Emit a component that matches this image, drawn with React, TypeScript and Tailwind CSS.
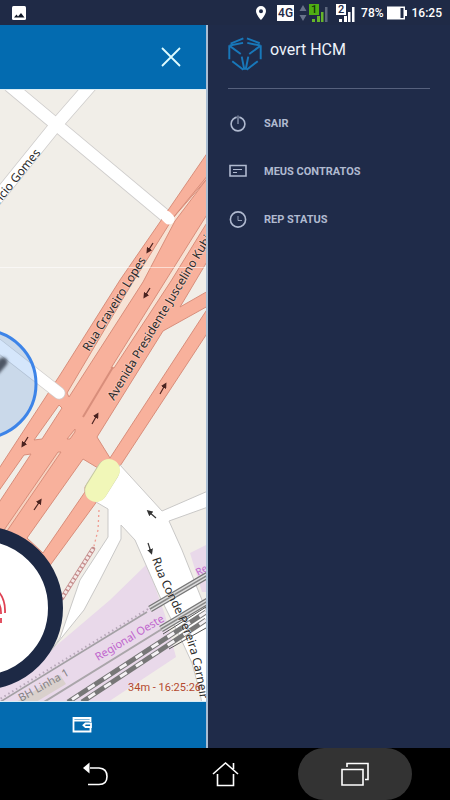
import React from "react";

function MapView() {
  return (
    <svg
      viewBox="0 90 206 611"
      preserveAspectRatio="xMaxYMax slice"
      className="absolute inset-0 h-full w-full font-['Noto_Sans',sans-serif]"
      role="img"
      aria-label="Mapa"
    >
      <defs>
        <path id="conde" d="M152 559 Q158 577 165 591 Q178 616 187 641 Q196 668 202 712" />
        <marker id="tip" viewBox="0 0 6 6" refX="3" refY="3" markerWidth="5" markerHeight="5" orient="auto">
          <path d="M0 0 L6 3 L0 6Z" fill="#4a2320" />
        </marker>
        <marker id="tipDark" viewBox="0 0 6 6" refX="3" refY="3" markerWidth="5" markerHeight="5" orient="auto">
          <path d="M0 0 L6 3 L0 6Z" fill="#333" />
        </marker>
        <filter id="soft" x="-200%" y="-200%" width="500%" height="500%">
          <feGaussianBlur stdDeviation="1.5" />
        </filter>
      </defs>
      <rect y="90" width="206" height="612" fill="#f1eee8" />

      {/* station area */}
      <path d="M147 564L110 600L57 645L0 688V702H108L176 657L165 615Z" fill="#e9d9ea" />
      <path d="M190 553L206 545V592H202Z" fill="#e9d9ea" />

      {/* residential streets */}
      <g fill="none" stroke="#cfcdcc" strokeWidth="13.5">
        <path d="M10 86L168 218" strokeLinecap="round" />
        <path d="M91 85L56 125L-6 202" />
      </g>
      <g fill="none" stroke="#fff" strokeWidth="12">
        <path d="M10 86L168 218" strokeLinecap="round" />
        <path d="M91 85L56 125L-6 202" />
      </g>

      {/* avenue */}
      <g stroke="#d88e7b" strokeWidth="1">
        <path d="M208 152L160 222L120 280L60 375L-2 470V590H32L95 504L122 463L208 332Z" fill="#f8b19c" />
        <g fill="#f1eee8">
          <path d="M208 260L180 307L208 291Z" />
          <path d="M208 306L163 331L97 437L110 458L208 308Z" />
          <path d="M83 459L98 468L85 487V492L43 553L27 538Z" />
          <path d="M206 180L173 218L128 290L67 393L69 397L143 282L175 221Z" fill="#f7e3d5" />
          <path d="M208 213L166 280L111 368L114 368L171 281L208 221Z" fill="#f7e3d5" />
          <path d="M59 405L62 408L42 439L34 440Z" />
          <path d="M24 455L31 454L-2 504V492Z" />
          <path d="M75 429V432L70 439H67Z" fill="#f7d2c0" />
          <path d="M58 452H61L7 531L4 530Z" fill="#f7d2c0" />
        </g>
        <path d="M208 175L172 219" />
        <path d="M113 367L83 417" strokeWidth="2" />
      </g>
      <path d="M166 216L169 219" stroke="#fff" strokeWidth="11" strokeLinecap="round" />

      <path d="M-5 343L59 393" stroke="#cfcdcc" strokeWidth="13" strokeLinecap="round" />
      <path d="M-5 343L59 393" stroke="#fff" strokeWidth="11.5" strokeLinecap="round" />

      {/* lower streets */}
      <path
        d="M120 465L162 511L208 491V507L169 521L182 550L202 600L208 615V704H202L200 693L192 663L180 637L160 597L135 540L121 525V539L100 580L84 610L50 652L60 638L80 580L108 537V509L96 502Z"
        fill="#fff"
        stroke="#c9c8c7"
      />
      <path d="M108 471L96 490" stroke="#c5c9a4" strokeWidth="23" strokeLinecap="round" />
      <path d="M109 470L96 491" stroke="#f1f7b8" strokeWidth="22" strokeLinecap="round" />
      <path d="M99 510L98 530L94 546" fill="none" stroke="#ef9c91" strokeWidth="1.3" strokeDasharray="2 3" />
      <path d="M93 549L62 598" stroke="#c58d8c" strokeWidth="4.5" strokeLinecap="round" />
      <path d="M93 549L62 598" stroke="#f4e8e6" strokeWidth="3" strokeDasharray="3 1.5" />

      {/* railway */}
      <g fill="none">
        <path d="M147 612L0 702" stroke="#a3a0a4" strokeWidth="1.6" />
        <path d="M148 609L0 699" stroke="#b9a9bb" strokeWidth="2" strokeDasharray="1.5 3" />
        <path d="M162 629L44 702" stroke="#aaa6aa" strokeWidth="2" />
        <g stroke="#777">
          <path d="M206 612L68 702" strokeWidth="5" />
          <path d="M206 620L82 702" strokeWidth="5" />
        </g>
        <g stroke="#f5f2f5" strokeWidth="3" strokeDasharray="8 11">
          <path d="M206 612L68 702" />
          <path d="M206 620L82 702" />
        </g>
        <path d="M150 609L208 575M161 629L208 601" stroke="#777" strokeWidth="7" />
        <path d="M150 609L208 575M161 629L208 601" stroke="#ddd" strokeWidth="4.5" />
        <path d="M150 609L208 575M161 629L208 601" stroke="#888" strokeWidth="1.5" />
        <path d="M163 634L206 607M169 649L206 628" stroke="#555" strokeWidth="1" />
      </g>

      {/* one-way arrows */}
      <g stroke="#4a2320" strokeWidth="1.2">
        <path d="M153 243L148 251" markerEnd="url(#tip)" />
        <path d="M150 288L145 296" markerEnd="url(#tip)" />
        <path d="M28 437L23 445" markerEnd="url(#tip)" />
        <path d="M92 424L97 415" markerEnd="url(#tip)" />
        <path d="M160 394L165 385" markerEnd="url(#tip)" />
        <path d="M34 510L40 501" markerEnd="url(#tip)" />
      </g>
      <g stroke="#333" strokeWidth="1.2">
        <path d="M156 518L149 512" markerEnd="url(#tipDark)" />
        <path d="M148 543L151 552" markerEnd="url(#tipDark)" />
      </g>
      <path d="M0 267.500H206" stroke="#fff" strokeOpacity="0.55" />

      {/* labels */}
      <g fontSize="12" fill="#2b2b2b" stroke="#fff" strokeWidth="1.5" strokeOpacity="0.3" paintOrder="stroke">
        <text transform="translate(41 153) rotate(-51)" textAnchor="end">ncio Gomes</text>
        <text transform="translate(89 352) rotate(-58)">Rua Craveiro Lopes</text>
        <text transform="translate(114 401) rotate(-59)">Avenida Presidente Juscelino Kubi</text>
        <text>
          <textPath href="#conde">Rua Conde Pereira Carneir</textPath>
        </text>
      </g>
      <path d="M16 702L60 675L66 684L36 702Z" fill="#d9d0cc" />
      <g fontSize="11">
        <text transform="translate(21 702) rotate(-29)" fill="#858285">BH Linha 1</text>
        <text transform="translate(98 661) rotate(-31)" fill="#c065cd">Regional Oeste</text>
        <text transform="translate(198 576) rotate(-28)" fontSize="10" fill="#c065cd">Re</text>
      </g>

      {/* current position */}
      <circle cx="-18" cy="384" r="54" fill="#5b9df0" fillOpacity="0.26" stroke="#3d84e8" strokeWidth="3" />
      <path d="M-4 370L3 362" stroke="#4d5665" strokeWidth="9" strokeLinecap="round" filter="url(#soft)" />
    </svg>
  );
}

function Signal({ n, on }: { n: string; on: boolean }) {
  return (
    <span className="relative h-5 w-5">
      <svg viewBox="0 0 20 20" className="h-5 w-5" aria-hidden="true">
        <g fill={on ? "#65b52a" : "#fff"}>
          <path d="M4 16h3v3H4zM9 13h3v6H9z" />
          <path d="M13 9h2.500v10h-2.500z" />
        </g>
        <path d="M17 4h2.500v15h-2.500z" fill={on ? "#5d677d" : "#fff"} />
        <path d="M1 1h10v11H1z" fill={on ? "#4fae13" : "#fff"} />
      </svg>
      <span className={"absolute left-[3px] top-px text-[11px] leading-[11px] " + (on ? "text-[#12330a]" : "text-[#1f2a47]")}>{n}</span>
    </span>
  );
}

function StatusBar() {
  return (
    <header className="flex h-[25px] shrink-0 items-center bg-[#1f2a46] pl-3 pr-2 text-[12px] font-medium text-white">
      <svg viewBox="0 0 14 14" className="h-3.5 w-3.5" aria-hidden="true">
        <rect width="14" height="14" rx="1.500" fill="#fff" />
        <path d="M2 11.500L4.500 8.500L6 10.500L9 7L12.500 11.500Z" fill="#111827" />
      </svg>
      <div className="ml-auto flex items-center">
        <svg viewBox="0 0 12 16" className="mr-2.5 h-4 w-3" aria-hidden="true">
          <path fillRule="evenodd" d="M6 1a5 5 0 0 0-5 5c0 4 5 9 5 9s5-5 5-9a5 5 0 0 0-5-5Zm0 3.200a2 2 0 1 1 0 4 2 2 0 0 1 0-4Z" fill="#fff" />
        </svg>
        <span className="mr-px flex h-4 w-[17px] items-center justify-center bg-white text-[12px] leading-4 text-[#1f2a46]">4G</span>
        <svg viewBox="0 0 8 16" className="ml-1 mr-px h-4 w-2" aria-hidden="true">
          <path d="M4 0L7.500 6H.5ZM4 16L7.500 10H.5Z" fill="#68728a" />
        </svg>
        <Signal n="1" on />
        <span className="w-[7px]" />
        <Signal n="2" on={false} />
        <span className="ml-1.5 mr-0.5">78%</span>
        <svg viewBox="0 0 22 14" className="mr-1 h-3.5 w-[22px]" aria-hidden="true">
          <path d="M1 .5H19V4h2v6h-2v3.500H1Z" fill="#fff" />
          <path d="M14.500 2h3v10h-3z" fill="#1f2a46" />
        </svg>
        <span>16:25</span>
      </div>
    </header>
  );
}

function Logo() {
  return (
    <svg viewBox="7 112 104 104" className="h-[34px] w-[34px]" fill="none" stroke="#1878ba" strokeWidth="6" aria-hidden="true">
      <path d="M15 132L54 116M65 116L104 131" />
      <path d="M12 138L53 130M106 138L66 130" />
      <path d="M11 137V180M107 137V180" />
      <path d="M13 140L46 164M105 140L72 164" />
      <path d="M20 186L54 212M98 186L64 212" />
      <path d="M49 172L57 212M69 172L61 212" />
    </svg>
  );
}

const items = [
  {
    label: "SAIR",
    icon: (
      <>
        <circle cx="9" cy="9" r="6.900" strokeWidth="1.600" />
        <path d="M9 0v5" stroke="#1f2b49" strokeWidth="2.500" />
        <path d="M9 .5V9" strokeWidth="1" />
      </>
    ),
  },
  {
    label: "MEUS CONTRATOS",
    icon: (
      <>
        <path d="M1 2.500h16v10.500h-16z" strokeWidth="1.600" />
        <path d="M4 6.500h9M4 9.500h4" strokeWidth="1" />
      </>
    ),
  },
  {
    label: "REP STATUS",
    icon: (
      <>
        <circle cx="9" cy="8.500" r="7.600" strokeWidth="1.600" />
        <path d="M9 5v4.500h4" strokeWidth="0.800" />
      </>
    ),
  },
];

export default function App() {
  return (
    <div className="flex h-screen flex-col overflow-hidden bg-[#1f2b49] font-[Roboto,sans-serif]">
      <StatusBar />
      <div className="flex min-h-0 flex-1">
        <main className="flex min-w-0 flex-1 flex-col border-r-2 border-[#a9bdd3]">
          <div className="flex h-16 shrink-0 items-center justify-end bg-[#036bb0] pr-6">
            <button type="button" aria-label="Fechar" className="text-[#dffcff]">
              <svg viewBox="0 0 22 22" className="h-[22px] w-[22px]" stroke="currentColor" strokeWidth="1.800" aria-hidden="true">
                <path d="M2 2L20 20M20 2L2 20" />
              </svg>
            </button>
          </div>
          <section className="relative min-h-0 flex-1 overflow-hidden border-y border-[#d9edf5]">
            <MapView />
            <button
              type="button"
              aria-label="Registrar ponto"
              className="absolute -left-[101px] bottom-[11px] flex h-[164px] w-[164px] items-center justify-center rounded-full border-[15px] border-[#1d2945] bg-white"
            >
              <svg viewBox="-26 -28 52 56" className="h-14 w-[52px] shrink-0" fill="none" stroke="#df4052" strokeWidth="1.800" aria-hidden="true">
                <path d="M-24 5C-26-34 26-34 24 5M-20 6C-21-22 21-22 20 6M-15 7C-16-15 16-15 15 7M-9 8C-10-8 10-8 9 8M20 10V15M15 11V15M-4 8V20M4 8V22" />
              </svg>
            </button>
            <p className="absolute bottom-[7px] right-[5px] text-[11px] leading-3 text-[#b4492f]">34m - 16:25:26</p>
          </section>
          <div className="flex h-[46px] shrink-0 items-center justify-end bg-[#036bb0] pr-[114px]">
            <button type="button" aria-label="Carteira" className="text-white">
              <svg viewBox="0 0 20 18" className="h-[18px] w-5" fill="none" stroke="currentColor" strokeWidth="1.800" aria-hidden="true">
                <path d="M18.500 6V2H1.500V15.500H18.500V12M2 4.500H18" />
                <path d="M19 7.500H13.500L11.500 9.200L13.500 11H19Z" />
              </svg>
            </button>
          </div>
        </main>
        <aside className="flex w-[242px] shrink-0 flex-col pl-5 pr-5 pt-3">
          <div className="flex h-[52px] items-start gap-2 border-b border-[#56617d]">
            <Logo />
            <h1 className="text-[16px] leading-[26px] text-[#eef3fb]">overt HCM</h1>
          </div>
          <nav aria-label="Menu" className="pt-[11px]">
            {items.map((item) => (
              <button key={item.label} type="button" className="flex h-12 w-full items-center gap-[17px] pl-px text-[11px] font-bold text-[#b0bad0]">
                <svg viewBox="0 0 18 18" className="h-[18px] w-[18px]" fill="none" stroke="currentColor" aria-hidden="true">
                  {item.icon}
                </svg>
                {item.label}
              </button>
            ))}
          </nav>
        </aside>
      </div>
      <nav aria-label="Sistema" className="flex h-[52px] shrink-0 items-center justify-between bg-black pl-[39px] pr-[38px] text-white">
        <button type="button" aria-label="Voltar" className="flex h-full w-[114px] items-center justify-center">
          <svg viewBox="0 0 28 26" className="h-[26px] w-7" fill="none" stroke="currentColor" strokeWidth="1.600" aria-hidden="true">
            <path d="M8 7H17Q25 7.500 25 15.500T17 23.500H6" />
            <path d="M1 7L7.500 1.500V12.500Z" fill="currentColor" stroke="none" />
          </svg>
        </button>
        <button type="button" aria-label="Início" className="flex h-full w-[114px] items-center justify-center">
          <svg viewBox="0 0 28 26" className="h-[26px] w-7" fill="none" stroke="currentColor" strokeWidth="1.600" aria-hidden="true">
            <path d="M1 13L13.500 2L26 13M5.500 13V24.500H21.500V13M21.500 8V2" />
          </svg>
        </button>
        <button type="button" aria-label="Recentes" className="flex h-full w-[114px] items-center justify-center rounded-full bg-[#333]">
          <svg viewBox="0 0 28 26" className="h-[26px] w-7" fill="none" stroke="currentColor" strokeWidth="1.600" aria-hidden="true">
            <path d="M1 8.500H22V24H1ZM6 6V2.500H27V18.500H24" />
          </svg>
        </button>
      </nav>
    </div>
  );
}
